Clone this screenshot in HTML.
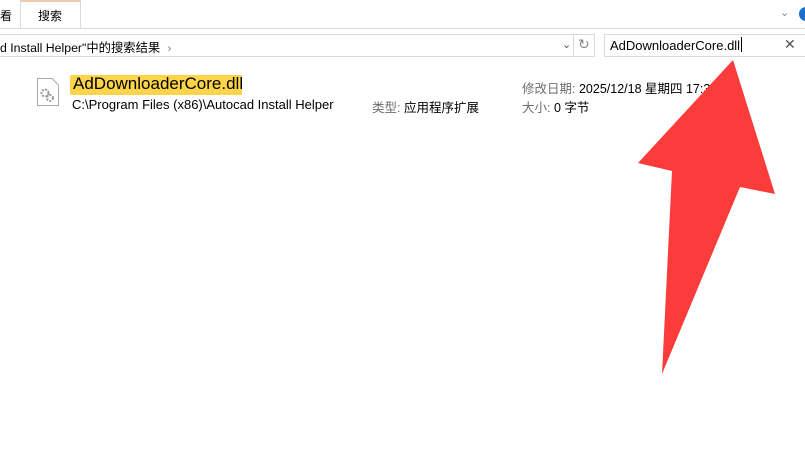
<!DOCTYPE html>
<html><head><meta charset="utf-8"><style>
body{margin:0;width:805px;height:449px;background:#fff;position:relative;overflow:hidden;font-family:"Liberation Sans","Noto Sans CJK SC",sans-serif;color:#000}
.a{position:absolute;white-space:nowrap}
.g{color:#6d6d6d}
</style></head><body>
<div class="a" style="left:0;top:28px;width:805px;height:1px;background:#dadada"></div>
<div class="a" style="left:20px;top:0;width:61px;height:28px;border-left:1px solid #dadada;border-right:1px solid #dadada;border-top:2px solid #f0c9b0;background:#fff;box-sizing:border-box"></div>
<div class="a" style="left:0;top:7px;font-size:12px">看</div>
<div class="a" style="left:38px;top:7px;font-size:12px">搜索</div>
<div class="a" style="left:780px;top:6px;font-size:11px;color:#888">⌄</div>
<div class="a" style="left:799px;top:7px;width:14px;height:14px;border-radius:7px;background:#1a6fd1"></div>
<div class="a" style="left:-1px;top:34px;width:596px;height:23px;border:1px solid #d9d9d9;box-sizing:border-box"></div>
<div class="a" style="left:573px;top:34px;width:1px;height:23px;background:#d9d9d9"></div>
<div class="a" style="left:0;top:38px;font-size:12.3px">d Install Helper"中的搜索结果 <span style="color:#777;font-size:11px;margin-left:4px">›</span></div>
<div class="a" style="left:562px;top:38px;font-size:11px;color:#555">⌄</div>
<div class="a" style="left:578px;top:36px;font-size:14px;color:#888">↻</div>
<div class="a" style="left:604px;top:34px;width:203px;height:23px;border:1px solid #d9d9d9;box-sizing:border-box"></div>
<div class="a" style="left:610px;top:37px;font-size:13px">AdDownloaderCore.dll<span style="display:inline-block;width:1px;height:15px;background:#000;vertical-align:-2px;margin-left:1px"></span></div>
<div class="a" style="left:784px;top:36px;font-size:14px;color:#555">✕</div>
<svg class="a" style="left:37px;top:78px" width="22" height="28"><path d="M0.5 0.5H15L21.5 7V27.5H0.5Z" fill="#fff" stroke="#aaa"/><circle cx="8" cy="15" r="3.5" fill="none" stroke="#999" stroke-width="2" stroke-dasharray="2 1.3"/><circle cx="13" cy="20" r="3" fill="none" stroke="#999" stroke-width="2" stroke-dasharray="2 1.3"/></svg>
<div class="a" style="left:70px;top:75px;width:172px;height:20px;background:#fdd44a;border-radius:2px"></div>
<div class="a" style="left:73px;top:74px;font-size:17px">AdDownloaderCore.dll</div>
<div class="a" style="left:72px;top:97px;font-size:13px">C:\Program Files (x86)\Autocad Install Helper</div>
<div class="a" style="left:372px;top:97px;font-size:12.5px"><span class="g">类型:</span> 应用程序扩展</div>
<div class="a" style="left:522px;top:78px;font-size:12.5px"><span class="g">修改日期:</span> 2025/12/18 星期四 17:30</div>
<div class="a" style="left:522px;top:97px;font-size:12.5px"><span class="g">大小:</span> 0 字节</div>
<svg class="a" style="left:0;top:0" width="805" height="449"><polygon points="733,60 775,194 740,187 662,374 672,171 638,163" fill="#fc3b3b"/></svg>
</body></html>
